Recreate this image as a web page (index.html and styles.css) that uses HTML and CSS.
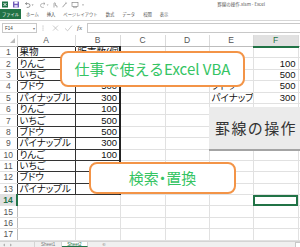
FILE: index.html
```html
<!DOCTYPE html>
<html lang="ja">
<head>
  <meta charset="UTF-8">
  <title>罫線の操作.xlsm - Excel</title>
  <link rel="stylesheet" href="styles.css">
</head>
<body>

<!-- TITLE BAR -->
<div class="titlebar">
  <svg class="qat" width="90" height="9" viewBox="0 0 90 9">
    <rect x="2" y="1.5" width="6" height="6" fill="#1e7145"/>
    <path d="M3.5 3 L6.5 6 M6.5 3 L3.5 6" stroke="#fff" stroke-width="0.9"/>
    <rect x="13" y="1.5" width="6" height="6" rx="0.6" fill="#6f5bb8"/>
    <rect x="14.4" y="1.5" width="3.2" height="2.2" fill="#fff"/>
    <rect x="14.4" y="5" width="3.2" height="2.5" fill="#d8d2ee"/>
    <path d="M25.5 3.6 h2.6 a1.9 1.9 0 0 1 0 3.8 h-1.4 M25.5 3.6 l1.4 -1.2 M25.5 3.6 l1.4 1.2" stroke="#6a6a6a" stroke-width="0.7" fill="none"/>
    <path d="M31.6 4.6 h2 l-1 1.1z" fill="#888"/>
    <path d="M45 3.6 h-2.6 a1.9 1.9 0 0 0 0 3.8 h1.4 M45 3.6 l-1.4 -1.2 M45 3.6 l-1.4 1.2" stroke="#9a9a9a" stroke-width="0.7" fill="none"/>
    <path d="M46.6 4.6 h2 l-1 1.1z" fill="#aaa"/>
    <path d="M54 7.5 v-4 a0.7 0.7 0 0 1 1.4 0 v2 l1.6 0.4 v1.6" stroke="#777" stroke-width="0.6" fill="none"/>
    <path d="M62.5 7.2 l3.8 -4.4 M65.6 2.4 l1 0.9" stroke="#777" stroke-width="0.7" fill="none"/>
    <rect x="72" y="2.6" width="6" height="4" stroke="#777" stroke-width="0.6" fill="none"/>
    <path d="M73.5 6.6 v1 h3 v-1" stroke="#777" stroke-width="0.5" fill="none"/>
    <path d="M82 4.6 h2 l-1 1.1z" fill="#888"/>
  </svg>
  <div class="doc-title">罫線の操作.xlsm - Excel</div>
</div>

<!-- RIBBON TABS -->
<div class="tabs">
  <span class="file-tab">ファイル</span>
  <span>ホーム</span>
  <span>挿入</span>
  <span>ページレイアウト</span>
  <span>数式</span>
  <span>データ</span>
  <span>校閲</span>
  <span>表示</span>
</div>

<!-- FORMULA BAR -->
<div class="formulabar">
  <div class="namebox"><span>F14</span><span class="drop">▾</span></div>
  <svg class="fbtns" width="40" height="10" viewBox="0 0 40 10">
    <circle cx="6" cy="3" r="0.5" fill="#999"/>
    <circle cx="6" cy="5" r="0.5" fill="#999"/>
    <circle cx="6" cy="7" r="0.5" fill="#999"/>
    <path d="M16 2.6 L21 7.6 M21 2.6 L16 7.6" stroke="#b5b5b5" stroke-width="0.7"/>
    <path d="M28 5.4 L30.6 7.8 L35 2.6" stroke="#b5b5b5" stroke-width="0.7" fill="none"/>
  </svg>
  <span class="fx">fx</span>
  <div class="formula-input"></div>
</div>

<!-- SHEET -->
<div class="sheet">
  <table class="grid">
    <colgroup>
      <col class="c-rh"><col class="c-a"><col class="c-b"><col class="c-c"><col class="c-d"><col class="c-e"><col class="c-f"><col class="c-g">
    </colgroup>
    <thead>
      <tr>
        <th class="corner"><svg width="5" height="5" viewBox="0 0 5 5"><path d="M5 0 V5 H0z" fill="#b9b9b9"/></svg></th>
        <th class="tb">A</th><th class="tb">B</th><th>C</th><th>D</th><th>E</th><th class="sel-col">F</th><th>G</th>
      </tr>
    </thead>
    <tbody>
      <tr><th class="tb">1</th><td class="t">果物</td><td class="t r">販売数(個)</td><td></td><td></td><td></td><td></td><td></td></tr>
      <tr><th class="tb">2</th><td class="t">りんご</td><td class="t r n">100</td><td></td><td></td><td>りんご</td><td class="n">100</td><td></td></tr>
      <tr><th class="tb">3</th><td class="t">いちご</td><td class="t r n">500</td><td></td><td></td><td>いちご</td><td class="n">500</td><td></td></tr>
      <tr><th class="tb">4</th><td class="t">ブドウ</td><td class="t r n">500</td><td></td><td></td><td>ブドウ</td><td class="n">500</td><td></td></tr>
      <tr><th class="tb">5</th><td class="t">パイナップル</td><td class="t r n">300</td><td></td><td></td><td>パイナップル</td><td class="n">300</td><td></td></tr>
      <tr><th class="tb">6</th><td class="t">りんご</td><td class="t r n">100</td><td></td><td></td><td></td><td></td><td></td></tr>
      <tr><th class="tb">7</th><td class="t">いちご</td><td class="t r n">500</td><td></td><td></td><td></td><td></td><td></td></tr>
      <tr><th class="tb">8</th><td class="t">ブドウ</td><td class="t r n">500</td><td></td><td></td><td></td><td></td><td></td></tr>
      <tr><th class="tb">9</th><td class="t">パイナップル</td><td class="t r n">300</td><td></td><td></td><td></td><td></td><td></td></tr>
      <tr><th class="tb">10</th><td class="t">りんご</td><td class="t r n">100</td><td></td><td></td><td></td><td></td><td></td></tr>
      <tr><th class="tb">11</th><td class="t">いちご</td><td class="t r n">500</td><td></td><td></td><td></td><td></td><td></td></tr>
      <tr><th class="tb">12</th><td class="t">ブドウ</td><td class="t r n">500</td><td></td><td></td><td></td><td></td><td></td></tr>
      <tr><th class="tb">13</th><td class="t">パイナップル</td><td class="t r n">300</td><td></td><td></td><td></td><td></td><td></td></tr>
      <tr><th class="sel-row">14</th><td></td><td></td><td></td><td></td><td></td><td class="active"></td><td></td></tr>
      <tr><th>15</th><td></td><td></td><td></td><td></td><td></td><td></td><td></td></tr>
      <tr><th>16</th><td></td><td></td><td></td><td></td><td></td><td></td><td></td></tr>
      <tr><th>17</th><td></td><td></td><td></td><td></td><td></td><td></td><td></td></tr>
    </tbody>
  </table>

  <!-- shapes floating over the sheet -->
  <div class="callout callout-vba">仕事で使えるExcel VBA</div>
  <div class="shape-button">罫線の操作</div>
  <div class="callout callout-search">検索・置換</div>
</div>

<!-- SHEET TABS -->
<div class="sheetbar">
  <svg class="nav" width="34" height="6" viewBox="0 0 34 6">
    <path d="M5 1.5 L3 3 L5 4.5z" fill="#b0b0b0"/>
    <path d="M10 1.5 L12 3 L10 4.5z" fill="#b0b0b0"/>
  </svg>
  <span class="sheet-tab">Sheet1</span>
  <span class="sheet-tab active">Sheet2</span>
  <span class="add-sheet">⊕</span>
  <span class="hscroll"></span>
</div>

</body>
</html>
```

FILE: styles.css
```css
body {
  margin: 0;
  width: 300px;
  height: 247px;
  overflow: hidden;
  background: #fff;
  font-family: "Noto Sans CJK JP", sans-serif;
  color: #444;
}

/* title bar */
.titlebar {
  height: 9px;
  display: flex;
  align-items: center;
}

.qat { display: block; }

.doc-title {
  margin-left: auto;
  margin-right: 35px;
  font-size: 4.5px;
  line-height: 9px;
  color: #555;
}

/* ribbon tabs */
.tabs {
  height: 11px;
  display: flex;
  align-items: flex-start;
  gap: 8px;
  font-size: 4.3px;
  line-height: 10px;
  color: #555;
  border-bottom: 1px solid #d6d6d6;
}

.file-tab {
  width: 21px;
  height: 10px;
  margin-right: -3px;
  background: #217346;
  color: #fff;
  text-align: center;
}

/* formula bar */
.formulabar {
  height: 10px;
  margin-top: 2px;
  display: flex;
  align-items: stretch;
  font-family: "Liberation Sans", sans-serif;
}

.namebox {
  width: 35px;
  margin-left: 2px;
  box-sizing: border-box;
  border: 1px solid #c8c8c8;
  display: flex;
  align-items: center;
  justify-content: space-between;
  padding: 0 1px 0 2px;
  font-size: 4.5px;
  color: #444;
}

.namebox .drop { font-size: 4px; color: #777; }

.fbtns { display: block; }

.fx {
  width: 8px;
  font-family: "Liberation Serif", serif;
  font-style: italic;
  font-size: 7px;
  line-height: 10px;
  color: #666;
}

.formula-input {
  flex: 1;
  margin-left: 2px;
  border: 1px solid #c8c8c8;
  border-right: none;
}

/* sheet grid */
.sheet {
  position: relative;
  height: 206px;
  margin-top: 1.5px;
  overflow: hidden;
}

.grid {
  border-collapse: collapse;
  table-layout: fixed;
  width: 348px;
  font-family: "Liberation Sans", "Noto Sans CJK JP", sans-serif;
  font-feature-settings: "palt";
  font-size: 9.5px;
}

.c-rh { width: 17px; }
.c-a { width: 58px; }
.c-b { width: 45px; }
.c-c { width: 45px; }
.c-d { width: 44px; }
.c-e { width: 44px; }
.c-f { width: 45px; }
.c-g { width: 50px; }

.grid tr { height: 11.4px; }
.grid thead tr { height: 12px; }

.grid th, .grid td {
  padding: 0 2px;
  line-height: 10px;
  white-space: nowrap;
  overflow: hidden;
}

.grid td {
  border: 1px solid #e1e1e1;
  color: #111;
}

.grid th {
  font-weight: normal;
  font-size: 8.5px;
  color: #555;
  background: #fff;
}

.grid thead th {
  border-right: 1px solid #dadada;
  border-bottom: 1px solid #bdbdbd;
}

.grid tbody th {
  border-right: 1px solid #bdbdbd;
  border-bottom: 1px solid #e1e1e1;
}

.grid .corner {
  text-align: right;
  vertical-align: bottom;
  padding: 0 2px 3px 0;
  line-height: 0;
}

.grid thead th.tb { border-bottom: none; }
.grid tbody th.tb { border-right: none; }

.grid td.t { border: 1px solid #333; }
.grid td.r { border-right: 2px solid #222; }
.grid td.n { text-align: right; }

.grid th.sel-col {
  background: #e1e1e1;
  color: #217346;
  border-bottom: 2px solid #217346;
}

.grid th.sel-row {
  background: #e1e1e1;
  color: #217346;
  font-weight: bold;
  border-right: 2px solid #217346;
}

.grid td.active {
  outline: 2px solid #217346;
  outline-offset: -2px;
}

/* floating shapes */
.callout {
  position: absolute;
  box-sizing: border-box;
  display: flex;
  align-items: center;
  justify-content: center;
  background: #fff;
  border: 2px solid #f39447;
  border-radius: 8px;
  color: #35c463;
  font-size: 15px;
  font-feature-settings: "palt";
}

.callout-vba {
  left: 60px;
  top: 16px;
  width: 185px;
  height: 36px;
  font-feature-settings: normal;
}

.callout-search {
  left: 89px;
  top: 127px;
  width: 147px;
  height: 32px;
}

.shape-button {
  position: absolute;
  left: 209px;
  top: 72px;
  width: 100px;
  height: 44px;
  box-sizing: border-box;
  padding-left: 6px;
  display: flex;
  align-items: center;
  background: #ebebeb;
  border-bottom: 2px solid #a4a4a4;
  color: #333;
  font-size: 15px;
  letter-spacing: 1.4px;
}

/* sheet tabs */
.sheetbar {
  height: 6.5px;
  box-sizing: border-box;
  display: flex;
  align-items: stretch;
  background: #f0f0f0;
  border-top: 1px solid #d4d4d4;
  font-family: "Liberation Sans", sans-serif;
  font-size: 4.5px;
  line-height: 5.5px;
  color: #777;
}

.nav { display: block; border-right: 1px solid #d4d4d4; }

.sheet-tab {
  padding: 0 6px;
  border-right: 1px solid #d4d4d4;
}

.sheet-tab.active {
  background: #fff;
  color: #217346;
  border-bottom: 1px solid #217346;
  padding: 0 5px;
}

.add-sheet {
  margin-left: 14px;
  font-size: 5px;
  color: #999;
}

.hscroll {
  margin-left: auto;
  width: 4px;
  border-left: 1px solid #c8c8c8;
  border-top: 1px solid #c8c8c8;
  background: #fff;
}
```
